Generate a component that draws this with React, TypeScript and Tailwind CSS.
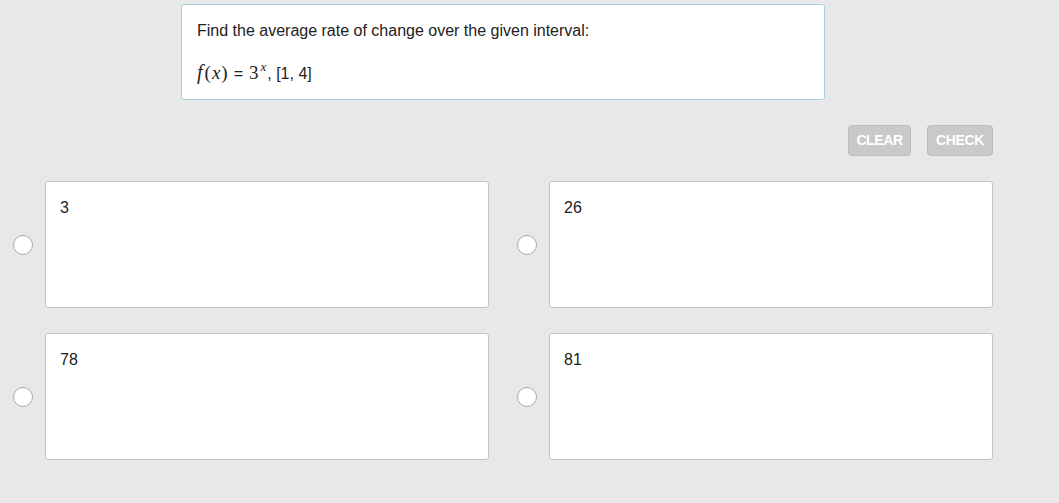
import React from "react";

const choices = ["3", "26", "78", "81"];

const serif = { fontFamily: '"Liberation Serif", "Times New Roman", serif' };

function Radio() {
  return (
    <div className="w-[20px] h-[20px] rounded-full border border-[#a8a8a8] bg-white shrink-0" />
  );
}

export default function App() {
  return (
    <div
      className="w-[1059px] h-[503px] bg-[#e8e8e8] overflow-hidden text-[#222]"
      style={{ fontFamily: '"Liberation Sans", Arial, sans-serif' }}
    >
      <div className="pt-[4px] pl-[181px]">
        <div className="w-[644px] h-[96px] bg-white border border-[#a6d3e0] rounded-[3px] pl-[15px] pt-[16px]">
          <div className="text-[16px] leading-[19px]">Find the average rate of change over the given interval:</div>
          <div className="mt-[22px] flex items-baseline text-[16px] leading-[20px]">
            <span className="italic text-[20px] pr-[2px]" style={serif}>f</span>
            <span className="text-[19px]" style={serif}>(</span>
            <span className="italic text-[19px] px-[1px]" style={serif}>x</span>
            <span className="text-[19px]" style={serif}>)</span>
            <span className="mx-[6px]">=</span>
            <span className="text-[19px]" style={serif}>3</span>
            <span className="italic text-[13px] relative top-[-8px] ml-[2px] mr-[1px]" style={serif}>x</span>
            <span>, [1, 4]</span>
          </div>
        </div>
      </div>

      <div className="flex justify-end gap-[16px] pr-[66px] mt-[25px]">
        <button className="w-[63px] h-[31px] rounded-[4px] bg-[#c9c9c9] border border-[#bcbcbc] text-white font-bold text-[14px] tracking-[-0.4px]">
          CLEAR
        </button>
        <button className="w-[66px] h-[31px] rounded-[4px] bg-[#c9c9c9] border border-[#bcbcbc] text-white font-bold text-[14px] tracking-[-0.4px]">
          CHECK
        </button>
      </div>

      <div className="pl-[13px] mt-[25px] grid grid-cols-[476px_476px] gap-x-[28px] gap-y-[25px]">
        {choices.map((c) => (
          <div key={c} className="flex items-center gap-[12px]">
            <Radio />
            <div className="w-[444px] h-[127px] bg-white border border-[#c4c4c4] rounded-[3px] pl-[14px] pt-[16px] text-[16px] leading-[19px]">
              {c}
            </div>
          </div>
        ))}
      </div>
    </div>
  );
}
